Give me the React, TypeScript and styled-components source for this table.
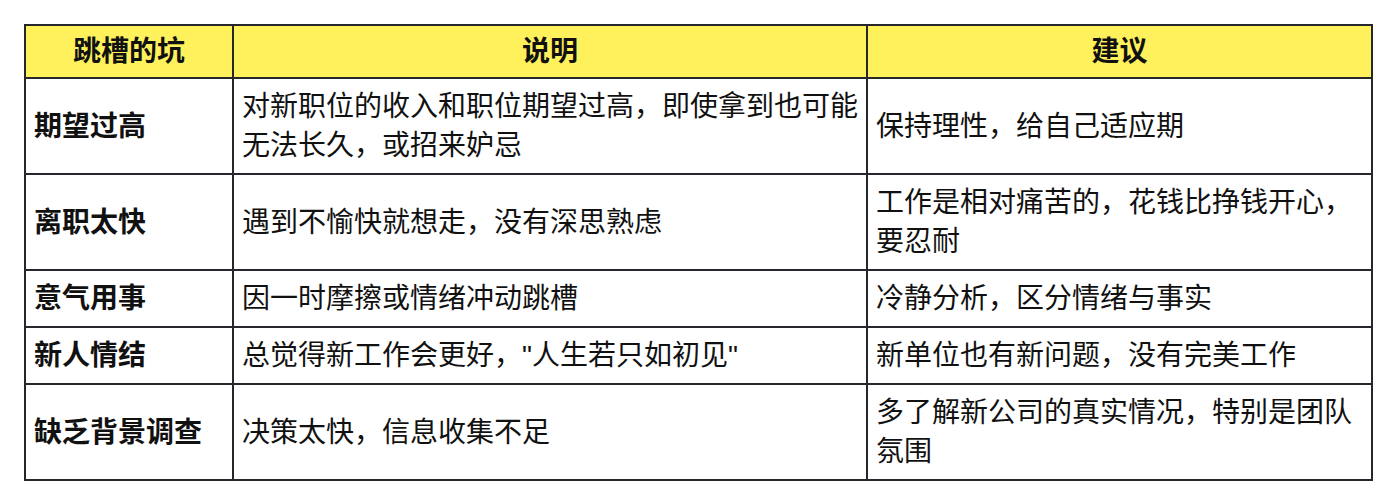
import styled, { createGlobalStyle } from "styled-components";

const GlobalStyle = createGlobalStyle`
  html, body {
    margin: 0;
    padding: 0;
    background: #ffffff;
  }
  body {
    font-family: "Liberation Sans", "Noto Sans CJK SC", sans-serif;
    color: #111111;
  }
`;

const Page = styled.div`
  padding: 24px;
`;

const Table = styled.table`
  border-collapse: separate;
  border-spacing: 0;
  table-layout: fixed;
  width: 1349px;
  border-top: 2px solid #25272c;
  border-left: 2px solid #25272c;
  font-size: 28px;
  line-height: 39px;
`;

const Col = styled.col<{ $w: number }>`
  width: ${(p) => p.$w}px;
`;

const Th = styled.th`
  background: #fff15b;
  font-weight: 700;
  text-align: center;
  padding: 6px 8px;
  border-right: 2px solid #25272c;
  border-bottom: 2px solid #25272c;
`;

const Td = styled.td<{ $bold?: boolean }>`
  font-weight: ${(p) => (p.$bold ? 700 : 400)};
  text-align: left;
  vertical-align: middle;
  padding: 8px 8px;
  border-right: 2px solid #25272c;
  border-bottom: 2px solid #25272c;
`;

const rows = [
  {
    pit: "期望过高",
    desc: "对新职位的收入和职位期望过高，即使拿到也可能无法长久，或招来妒忌",
    tip: "保持理性，给自己适应期",
  },
  {
    pit: "离职太快",
    desc: "遇到不愉快就想走，没有深思熟虑",
    tip: "工作是相对痛苦的，花钱比挣钱开心，要忍耐",
  },
  {
    pit: "意气用事",
    desc: "因一时摩擦或情绪冲动跳槽",
    tip: "冷静分析，区分情绪与事实",
  },
  {
    pit: "新人情结",
    desc: "总觉得新工作会更好，\"人生若只如初见\"",
    tip: "新单位也有新问题，没有完美工作",
  },
  {
    pit: "缺乏背景调查",
    desc: "决策太快，信息收集不足",
    tip: "多了解新公司的真实情况，特别是团队氛围",
  },
];

export default function App() {
  return (
    <>
      <GlobalStyle />
      <Page>
        <Table>
          <colgroup>
            <Col $w={208} />
            <Col $w={634} />
            <Col $w={505} />
          </colgroup>
          <thead>
            <tr>
              <Th>跳槽的坑</Th>
              <Th>说明</Th>
              <Th>建议</Th>
            </tr>
          </thead>
          <tbody>
            {rows.map((r) => (
              <tr key={r.pit}>
                <Td $bold>{r.pit}</Td>
                <Td>{r.desc}</Td>
                <Td>{r.tip}</Td>
              </tr>
            ))}
          </tbody>
        </Table>
      </Page>
    </>
  );
}
